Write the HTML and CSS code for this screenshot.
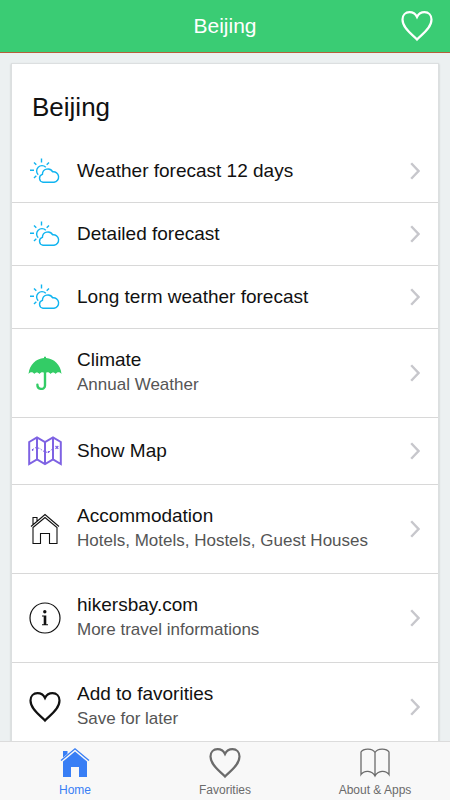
FILE: index.html
```html
<!DOCTYPE html>
<html lang="en">
<head>
  <meta charset="utf-8">
  <title>Beijing</title>
  <meta name="viewport" content="width=device-width, initial-scale=1">
  <link rel="stylesheet" href="styles.css">
</head>
<body>

<!-- shared icons -->
<svg class="defs" aria-hidden="true">
  <symbol id="heart" viewBox="0 0 34 34">
    <path d="M17 30.500C13 26 2.500 19.500 2.500 10.500C2.500 6 5.500 3.200 9.500 3.200C13 3.200 15.500 5 17 8C18.500 5 21 3.200 24.500 3.200C28.500 3.200 31.500 6 31.500 10.500C31.500 19.500 21 26 17 30.500Z" fill="none" stroke="currentColor" stroke-width="2.200"/>
  </symbol>
  <symbol id="weather" viewBox="0 0 34 34">
    <g fill="none" stroke="#10b4f0" stroke-width="1.400">
      <path d="M13.500 4.500v4M6 8.500l2.300 2.300M21 8.500l-2.300 2.300M2 16.300h4M6 24l2.300-2.300"/>
      <path d="M10.200 20.800A5.300 5.300 0 1 1 17.800 13.200"/>
      <path d="M15 28.200a4 4 0 0 1-.6-7.800 5.500 5.500 0 0 1 10.300-2.600 5.200 5.200 0 1 1 1.300 10.400z"/>
    </g>
  </symbol>
  <symbol id="chevron" viewBox="0 0 10 18">
    <path d="M1.200 1.200L8.500 9l-7.300 7.800" fill="none" stroke="#c7c7cc" stroke-width="2.400"/>
  </symbol>
</svg>

<header class="bar">
  <h1 class="bar-title">Beijing</h1>
  <button class="bar-btn" aria-label="Add to favorities"><svg class="icon"><use href="#heart"/></svg></button>
</header>

<main class="content">
  <div class="card">
    <h2 class="card-title">Beijing</h2>
    <nav class="list">
      <a class="item" href="#forecast">
        <svg class="icon"><use href="#weather"/></svg>
        <span class="label">Weather forecast 12 days</span>
        <svg class="chevron"><use href="#chevron"/></svg>
      </a>
      <a class="item" href="#detailed">
        <svg class="icon"><use href="#weather"/></svg>
        <span class="label">Detailed forecast</span>
        <svg class="chevron"><use href="#chevron"/></svg>
      </a>
      <a class="item" href="#longterm">
        <svg class="icon"><use href="#weather"/></svg>
        <span class="label">Long term weather forecast</span>
        <svg class="chevron"><use href="#chevron"/></svg>
      </a>
      <a class="item item-tall" href="#climate">
        <svg class="icon" viewBox="0 0 34 34">
          <path d="M16 2V.8h2V2C26 2.500 32.500 8.500 33.500 18c-1.500-2.300-4.500-2.300-5.800 0-1.300-2-3.800-2-5.100 0-1.500-2-3.500-2.300-5.600-.8-2.100-1.500-4.100-1.200-5.600.8-1.300-2-3.800-2-5.100 0C5 15.700 2 15.700.5 18 1.500 8.500 8 2.500 16 2z" fill="#33cc66"/>
          <path d="M17 16v13.500c0 4.600-7.600 4.600-7.600-.7" fill="none" stroke="#33cc66" stroke-width="2.400" stroke-linecap="round"/>
        </svg>
        <span class="label">Climate<small class="note">Annual Weather</small></span>
        <svg class="chevron"><use href="#chevron"/></svg>
      </a>
      <a class="item item-map" href="#map">
        <svg class="icon" viewBox="0 0 34 34">
          <path d="M1.200 8L9 3.500 17 8l8-4.500L32.800 8v22L25 25.500 17 30l-8-4.500L1.200 30zM9 3.500v22M17 8v22M25 3.500v22" fill="none" stroke="#7e62e3" stroke-width="2"/>
          <path d="M4.500 15.500L8 13.500l4 1 3 2.500 4.500 1.500 3-1.500 3-3.500" fill="none" stroke="#7e62e3" stroke-dasharray="1.500 1.500"/>
          <path d="M27.500 12l2.800 2.800M30.300 12l-2.800 2.800" stroke="#7e62e3" stroke-width="1.200"/>
          <circle cx="4.600" cy="16" r=".8" fill="#4a1fe0"/>
          <circle cx="20.500" cy="18" r=".8" fill="#4a1fe0"/>
        </svg>
        <span class="label">Show Map</span>
        <svg class="chevron"><use href="#chevron"/></svg>
      </a>
      <a class="item item-tall" href="#accommodation">
        <svg class="icon" viewBox="0 0 34 34">
          <g fill="none" stroke="#111" stroke-width="1.100">
            <path d="M3 14.500L17 2.500l14 12M5 15.500l12-10 12 10V31.500h-7.500v-10h-9v10H5zM5 12.500V5.500h4v3.500"/>
          </g>
        </svg>
        <span class="label">Accommodation<small class="note">Hotels, Motels, Hostels, Guest Houses</small></span>
        <svg class="chevron"><use href="#chevron"/></svg>
      </a>
      <a class="item item-tall" href="#hikersbay">
        <svg class="icon" viewBox="0 0 34 34">
          <circle cx="17" cy="17" r="15" fill="none" stroke="#111" stroke-width="1.200"/>
          <circle cx="16.800" cy="10.800" r="1.700" fill="#111"/>
          <path d="M14 14.500h4.300v8.800h1.700v1h-6v-1h1.700v-7.800H14z" fill="#111"/>
        </svg>
        <span class="label">hikersbay.com<small class="note">More travel informations</small></span>
        <svg class="chevron"><use href="#chevron"/></svg>
      </a>
      <a class="item item-tall" href="#favorite">
        <svg class="icon"><use href="#heart"/></svg>
        <span class="label">Add to favorities<small class="note">Save for later</small></span>
        <svg class="chevron"><use href="#chevron"/></svg>
      </a>
    </nav>
  </div>
</main>

<nav class="tabs">
  <a class="tab active" href="#home">
    <svg class="icon" viewBox="0 0 34 34">
      <path d="M3 14.500L17 2.800l14 11.700" fill="none" stroke="currentColor" stroke-width="1.400"/>
      <path d="M5 15.500L17 5.500l12 10V31h-8V21h-8v10H5zM5 11.500V5h4.500v2.800z" fill="currentColor"/>
    </svg>
    Home
  </a>
  <a class="tab" href="#favorities">
    <svg class="icon"><use href="#heart"/></svg>
    Favorities
  </a>
  <a class="tab" href="#about">
    <svg class="icon" viewBox="0 0 34 34">
      <path d="M17 6.500C14.500 2 5.500 2 3 6v22.500c3-4.500 11-4.500 14 1.500 3-6 11-6 14-1.500V6C28.500 2 19.500 2 17 6.500zV30" fill="none" stroke="currentColor" stroke-width="1.300"/>
    </svg>
    About &amp; Apps
  </a>
</nav>

</body>
</html>
```
FILE: styles.css
```css
* {
  box-sizing: border-box;
}

body {
  display: flex;
  flex-direction: column;
  height: 100vh;
  margin: 0;
  background-color: #ecf0f1;
  color: #111;
  font-family: "Liberation Sans", Arial, sans-serif;
}

a {
  color: inherit;
  text-decoration: none;
}

.defs {
  position: absolute;
  width: 0;
  height: 0;
}

.icon {
  flex: none;
  display: block;
  width: 34px;
  height: 34px;
}

/* top bar */
.bar {
  display: grid;
  grid-template-columns: 1fr auto 1fr;
  align-items: center;
  height: 53px;
  padding: 0 16px;
  background-color: #3acc74;
  border-bottom: 1px solid #b5603a;
  color: #fff;
}

.bar-title {
  grid-column: 2;
  margin: 0;
  font-size: 21px;
  font-weight: normal;
  line-height: 28px;
}

.bar-btn {
  justify-self: end;
  padding: 0;
  border: 0;
  background: none;
  color: inherit;
  cursor: pointer;
}

/* list */
.content {
  flex: 1;
  min-height: 0;
  padding: 10px 11px;
  overflow-y: auto;
  scrollbar-width: none;
}

.card {
  background-color: #fff;
  border: 1px solid #dcdfe0;
  box-shadow: 0 1px 2px rgba(0, 0, 0, 0.2);
}

.card-title {
  margin: 0;
  padding: 27px 20px 17px;
  font-size: 26px;
  font-weight: normal;
  line-height: 32px;
}

.item {
  display: flex;
  align-items: center;
  gap: 15px;
  min-height: 63px;
  padding: 0 18px 0 16px;
  border-bottom: 1px solid #d8d8d8;
}

.item-map {
  min-height: 67px;
}

.item-tall {
  min-height: 89px;
}

.label {
  flex: 1;
  font-size: 19px;
  line-height: 26px;
}

.note {
  display: block;
  padding-bottom: 2px;
  color: #555;
  font-size: 17px;
  line-height: 24px;
}

.chevron {
  flex: none;
  width: 10px;
  height: 18px;
}

/* bottom tabs */
.tabs {
  display: flex;
  height: 59px;
  background-color: #f8f8f8;
  border-top: 1px solid #dcdcdc;
}

.tab {
  flex: 1;
  display: flex;
  flex-direction: column;
  align-items: center;
  padding-top: 4px;
  color: #6b6b6b;
  font-size: 12px;
  line-height: 20px;
}

.active {
  color: #387ef5;
}
```
